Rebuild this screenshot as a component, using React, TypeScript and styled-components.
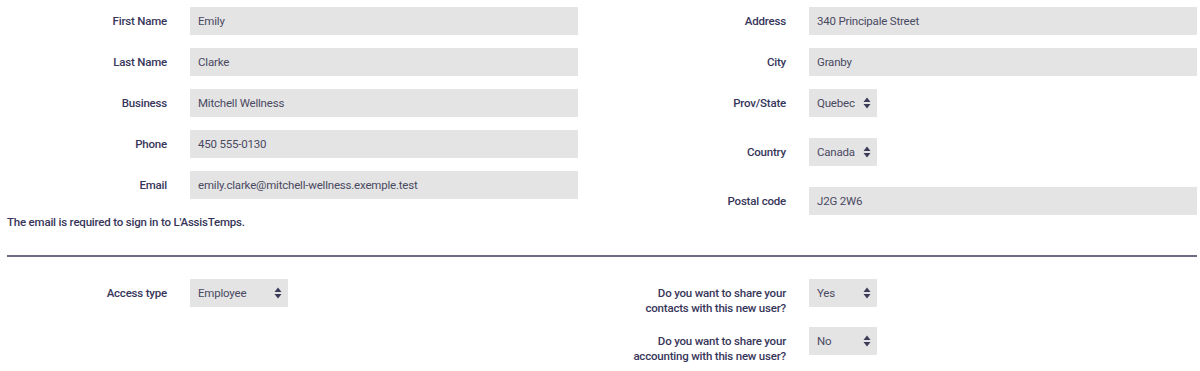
import styled, { createGlobalStyle } from 'styled-components';

const GlobalStyle = createGlobalStyle`
    body {
        margin: 0;
        background: #ffffff;
        font-family: Roboto, 'Noto Sans', sans-serif;
        font-size: 11.5px;
        color: #36354f;
    }
`;

const Page = styled.div`
    width: 1200px;
    padding: 7px 3px 0 7px;
    box-sizing: border-box;
`;

const TopGrid = styled.div`
    display: grid;
    grid-template-columns: 593px 1fr;
    align-items: start;
`;

const Column = styled.div<{ $labelWidth: number }>`
    display: grid;
    grid-template-columns: ${(p) => p.$labelWidth}px 388px;
    column-gap: 23px;
    align-content: start;
`;

const Field = styled.div<{ $after?: number }>`
    display: contents;

    & > * {
        margin-bottom: ${(p) => p.$after ?? 13}px;
    }
`;

const Label = styled.label`
    text-align: right;
    font-weight: 500;
    font-size: 11.5px;
    letter-spacing: -0.2px;
    line-height: 15px;
    padding-top: 7px;
    color: #37365a;
`;

const TextInput = styled.input`
    height: 28px;
    width: 388px;
    box-sizing: border-box;
    border: none;
    outline: none;
    background: #e4e4e4;
    padding: 0 8px;
    font-family: Roboto, 'Noto Sans', sans-serif;
    font-size: 11.5px;
    letter-spacing: -0.2px;
    color: #4a4962;
`;

const SelectWrap = styled.div<{ $width: number }>`
    position: relative;
    width: ${(p) => p.$width}px;
    height: 28px;
    justify-self: start;

    svg {
        position: absolute;
        right: 6px;
        top: 8px;
        pointer-events: none;
    }
`;

const Select = styled.select`
    appearance: none;
    -webkit-appearance: none;
    width: 100%;
    height: 28px;
    border: none;
    outline: none;
    background: #e4e4e4;
    padding: 0 8px;
    font-family: Roboto, 'Noto Sans', sans-serif;
    font-size: 11.5px;
    letter-spacing: -0.2px;
    color: #4a4962;
    border-radius: 0;
`;

const Note = styled.p`
    margin: 16px 0 0;
    font-weight: 500;
    font-size: 11.5px;
    letter-spacing: -0.2px;
    line-height: 15px;
    color: #37365a;
`;

const Divider = styled.hr`
    margin: 25px 0 22px;
    border: none;
    height: 2px;
    background: #6e6b84;
`;

function Arrows() {
    return (
        <svg width="8" height="12" viewBox="0 0 8 12">
            <path d="M4 0.5 L7.5 5 H0.5 Z M4 11.5 L7.5 7 H0.5 Z" fill="#3d3c58" />
        </svg>
    );
}

function Dropdown({ value, options, width }: { value: string; options: string[]; width: number }) {
    return (
        <SelectWrap $width={width}>
            <Select defaultValue={value}>
                {options.map((o) => (
                    <option key={o}>{o}</option>
                ))}
            </Select>
            <Arrows />
        </SelectWrap>
    );
}

export default function App() {
    return (
        <Page>
            <GlobalStyle />
            <TopGrid>
                <div>
                    <Column $labelWidth={160}>
                        <Field>
                            <Label>First Name</Label>
                            <TextInput readOnly value="Emily" />
                        </Field>
                        <Field>
                            <Label>Last Name</Label>
                            <TextInput readOnly value="Clarke" />
                        </Field>
                        <Field>
                            <Label>Business</Label>
                            <TextInput readOnly value="Mitchell Wellness" />
                        </Field>
                        <Field>
                            <Label>Phone</Label>
                            <TextInput readOnly value="450 555-0130" />
                        </Field>
                        <Field $after={0}>
                            <Label>Email</Label>
                            <TextInput readOnly value="emily.clarke@mitchell-wellness.exemple.test" />
                        </Field>
                    </Column>
                    <Note>The email is required to sign in to L'AssisTemps.</Note>
                </div>
                <Column $labelWidth={186}>
                    <Field>
                        <Label>Address</Label>
                        <TextInput readOnly value="340 Principale Street" />
                    </Field>
                    <Field>
                        <Label>City</Label>
                        <TextInput readOnly value="Granby" />
                    </Field>
                    <Field $after={21}>
                        <Label>Prov/State</Label>
                        <Dropdown value="Quebec" options={['Quebec', 'Ontario']} width={68} />
                    </Field>
                    <Field $after={21}>
                        <Label>Country</Label>
                        <Dropdown value="Canada" options={['Canada', 'USA']} width={68} />
                    </Field>
                    <Field $after={0}>
                        <Label>Postal code</Label>
                        <TextInput readOnly value="J2G 2W6" />
                    </Field>
                </Column>
            </TopGrid>
            <Divider />
            <TopGrid>
                <Column $labelWidth={160}>
                    <Field>
                        <Label>Access type</Label>
                        <Dropdown value="Employee" options={['Employee', 'Administrator']} width={98} />
                    </Field>
                </Column>
                <Column $labelWidth={186}>
                    <Field $after={11}>
                        <Label>
                            Do you want to share your
                            <br />
                            contacts with this new user?
                        </Label>
                        <Dropdown value="Yes" options={['Yes', 'No']} width={68} />
                    </Field>
                    <Field $after={0}>
                        <Label>
                            Do you want to share your
                            <br />
                            accounting with this new user?
                        </Label>
                        <Dropdown value="No" options={['Yes', 'No']} width={68} />
                    </Field>
                </Column>
            </TopGrid>
        </Page>
    );
}
